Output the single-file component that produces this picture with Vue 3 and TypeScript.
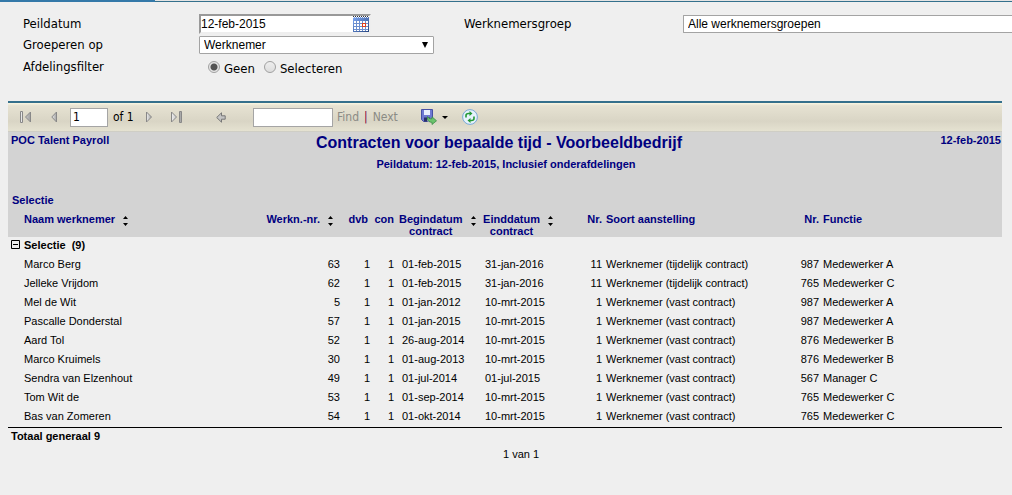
<script setup lang="ts">
import { ref } from 'vue'

interface Contract {
  name: string
  id: number
  begin: string
  end: string
  typeId: number
  type: string
  jobId: number
  job: string
}

const date = ref('12-feb-2015')
const filter = ref('geen')
const page = ref('1')
const search = ref('')

const fixed = 'Werknemer (vast contract)'
const temporary = 'Werknemer (tijdelijk contract)'

const contracts: Contract[] = [
  { name: 'Marco Berg', id: 63, begin: '01-feb-2015', end: '31-jan-2016', typeId: 11, type: temporary, jobId: 987, job: 'Medewerker A' },
  { name: 'Jelleke Vrijdom', id: 62, begin: '01-feb-2015', end: '31-jan-2016', typeId: 11, type: temporary, jobId: 765, job: 'Medewerker C' },
  { name: 'Mel de Wit', id: 5, begin: '01-jan-2012', end: '10-mrt-2015', typeId: 1, type: fixed, jobId: 987, job: 'Medewerker A' },
  { name: 'Pascalle Donderstal', id: 57, begin: '01-jan-2015', end: '10-mrt-2015', typeId: 1, type: fixed, jobId: 987, job: 'Medewerker A' },
  { name: 'Aard Tol', id: 52, begin: '26-aug-2014', end: '10-mrt-2015', typeId: 1, type: fixed, jobId: 876, job: 'Medewerker B' },
  { name: 'Marco Kruimels', id: 30, begin: '01-aug-2013', end: '10-mrt-2015', typeId: 1, type: fixed, jobId: 876, job: 'Medewerker B' },
  { name: 'Sendra van Elzenhout', id: 49, begin: '01-jul-2014', end: '01-jul-2015', typeId: 1, type: fixed, jobId: 567, job: 'Manager C' },
  { name: 'Tom Wit de', id: 53, begin: '01-sep-2014', end: '10-mrt-2015', typeId: 1, type: fixed, jobId: 765, job: 'Medewerker C' },
  { name: 'Bas van Zomeren', id: 54, begin: '01-okt-2014', end: '10-mrt-2015', typeId: 1, type: fixed, jobId: 765, job: 'Medewerker C' },
]
</script>

<template>
  <div class="page">
    <div class="tabline"><span></span></div>

    <form class="filters" @submit.prevent>
      <label for="date">Peildatum</label>
      <div class="datefield">
        <input id="date" v-model="date" type="text" />
        <button type="button" aria-label="Kalender">
          <svg width="16" height="16" viewBox="0 0 16 16">
            <defs>
              <linearGradient id="cal" x1="0" y1="0" x2="1" y2="1">
                <stop offset="0" stop-color="#7fa9f5" /><stop offset="1" stop-color="#27457f" />
              </linearGradient>
            </defs>
            <rect y="1" width="16" height="15" fill="url(#cal)" />
            <path d="M0 .5h16" stroke="#333" stroke-dasharray="1 1" />
            <path d="M0 1.5h16" stroke="#e8eefc" stroke-dasharray="1 1" />
            <rect x="1" y="5" width="14" height="10" fill="#fff" />
            <path d="M1 7.500h14M1 10.500h14M1 13.500h14M3.500 5v10M6.500 5v10M9.500 5v10M12.500 5v10" stroke="#6d8fce" />
            <rect x="9.500" y="7.500" width="3" height="3" fill="#fff" stroke="#e0401c" />
          </svg>
        </button>
      </div>
      <label for="group">Werknemersgroep</label>
      <div class="select open">
        <select id="group"><option>Alle werknemersgroepen</option></select>
      </div>

      <label for="by">Groeperen op</label>
      <div class="select by">
        <select id="by"><option>Werknemer</option></select>
        <svg width="6" height="6" viewBox="0 0 6 6"><path d="M0 0h6L3 6z" /></svg>
      </div>

      <span class="label row3">Afdelingsfilter</span>
      <div class="radios" role="radiogroup" aria-label="Afdelingsfilter">
        <input id="none" v-model="filter" type="radio" name="filter" value="geen" />
        <label for="none">Geen</label>
        <input id="pick" v-model="filter" type="radio" name="filter" value="selecteren" />
        <label for="pick">Selecteren</label>
      </div>
    </form>

    <main class="report">
      <div class="toolbar">
        <svg class="defs" width="0" height="0" aria-hidden="true">
          <defs>
            <linearGradient id="metal" x1="0" y1="0" x2="1" y2="0">
              <stop offset="0" stop-color="#eee" /><stop offset="1" stop-color="#a2a2a2" />
            </linearGradient>
          </defs>
        </svg>
        <div class="paging">
          <button class="first" type="button" aria-label="First page">
            <svg width="12" height="12" viewBox="0 0 12 12" fill="url(#metal)" stroke="#888"><path d="M.5.5h2v11h-2zM10.5 1v10L5.5 6z" /></svg>
          </button>
          <button class="prev" type="button" aria-label="Previous page">
            <svg width="7" height="12" viewBox="0 0 7 12" fill="url(#metal)" stroke="#888"><path d="M5.5 1v10L.8 6z" /></svg>
          </button>
          <input v-model="page" class="pageno" type="text" aria-label="Page" />
          <span class="of">of 1</span>
          <button class="next" type="button" aria-label="Next page">
            <svg width="7" height="12" viewBox="0 0 7 12" fill="url(#metal)" stroke="#888"><path d="M.5 1v10L5.5 6z" /></svg>
          </button>
          <button type="button" aria-label="Last page">
            <svg width="12" height="12" viewBox="0 0 12 12" fill="url(#metal)" stroke="#888"><path d="M.5 1v10L5.5 6zM8.500.5h2v11h-2z" /></svg>
          </button>
        </div>
        <button class="back" type="button" aria-label="Back">
          <svg width="10" height="11" viewBox="0 0 10 11"><path d="M.7 5.5 5.5.8v3h3.700v3.400H5.500v3z" fill="#c4c4c4" stroke="#777" /></svg>
        </button>
        <input v-model="search" class="search" type="text" aria-label="Find text" />
        <button class="text" type="button">Find</button>
        <span class="bar">|</span>
        <button class="text" type="button">Next</button>
        <button class="export" type="button" aria-label="Export">
          <svg width="28" height="16" viewBox="0 0 28 16">
            <path d="M.5.5h11v12h-9l-2-2z" fill="#6f79d2" stroke="#4650a6" />
            <path d="M3 1h6v5H3z" fill="#e9efff" />
            <path d="M3 8.500h6v4H3z" fill="#283068" /><path d="M6.500 9.500h1.500v3H6.500z" fill="#fff" />
            <path d="M6.500 7.500c1 2 2.500 2.500 4.500 2.200V7.800l4.500 4-4.500 3.700v-2.200c-3 0-5-2-4.500-5.800z" fill="#6cc46c" stroke="#3c8e49" stroke-width=".8" />
            <path d="M21 7h6l-3 3z" fill="#000" />
          </svg>
        </button>
        <button class="refresh" type="button" aria-label="Refresh">
          <svg width="16" height="16" viewBox="0 0 16 16">
            <circle cx="8" cy="8" r="7.400" fill="#e6f2fc" stroke="#79a9d5" />
            <path d="M4 8.500V6.500C4 5.200 5 4.500 6.500 4.500H8M12 7.500v2c0 1.300-1 2-2.500 2H8" fill="none" stroke="#249a34" stroke-width="1.600" />
            <path d="M7.500 2 10.500 4.500 7.500 7zM8.500 9 5.500 11.500l3 2.500z" fill="#249a34" />
          </svg>
        </button>
      </div>

      <header class="heading">
        <span>POC Talent Payroll</span>
        <div class="titles">
          <h1>Contracten voor bepaalde tijd - Voorbeeldbedrijf</h1>
          <p>Peildatum: 12-feb-2015, Inclusief onderafdelingen</p>
        </div>
        <span class="today">12-feb-2015</span>
      </header>

      <table>
        <colgroup>
          <col class="c-name" /><col class="c-id" /><col class="c-dvb" /><col class="c-con" /><col class="c-begin" />
          <col class="c-end" /><col class="c-nr" /><col class="c-type" /><col class="c-nr2" /><col />
        </colgroup>
        <thead>
          <tr class="section"><th colspan="10">Selectie</th></tr>
          <tr>
            <th class="name"><span class="sort">Naam werknemer <svg width="5" height="10" viewBox="0 0 5 10"><path d="M0 3h5L2.500 0zM0 7h5L2.500 10z" /></svg></span></th>
            <th class="num id"><span class="sort">Werkn.-nr. <svg width="5" height="10" viewBox="0 0 5 10"><path d="M0 3h5L2.500 0zM0 7h5L2.500 10z" /></svg></span></th>
            <th class="num dvb">dvb</th>
            <th class="num">con</th>
            <th class="date"><span class="sort"><span>Begindatum<br />contract</span><svg width="5" height="10" viewBox="0 0 5 10"><path d="M0 3h5L2.500 0zM0 7h5L2.500 10z" /></svg></span></th>
            <th class="date"><span class="sort"><span>Einddatum<br />contract</span><svg width="5" height="10" viewBox="0 0 5 10"><path d="M0 3h5L2.500 0zM0 7h5L2.500 10z" /></svg></span></th>
            <th class="num">Nr.</th>
            <th>Soort aanstelling</th>
            <th class="num">Nr.</th>
            <th>Functie</th>
          </tr>
        </thead>
        <tbody>
          <tr class="group">
            <td colspan="10">
              <button type="button" aria-label="Inklappen">
                <svg width="9" height="9" viewBox="0 0 9 9"><path d="M.5.5h8v8h-8zM2 4.500h5" fill="none" stroke="#000" /></svg>
              </button>
              <span>Selectie&nbsp; (9)</span>
            </td>
          </tr>
          <tr v-for="c in contracts" :key="c.id">
            <td class="name">{{ c.name }}</td>
            <td class="num">{{ c.id }}</td>
            <td class="num">1</td>
            <td class="num">1</td>
            <td class="begin">{{ c.begin }}</td>
            <td class="end">{{ c.end }}</td>
            <td class="num">{{ c.typeId }}</td>
            <td>{{ c.type }}</td>
            <td class="num">{{ c.jobId }}</td>
            <td>{{ c.job }}</td>
          </tr>
        </tbody>
        <tfoot>
          <tr><td colspan="10">Totaal generaal 9</td></tr>
        </tfoot>
      </table>
      <p class="pages">1 van 1</p>
    </main>
  </div>
</template>

<style>
html { background: #efefef; }
</style>

<style scoped>
.page { font: 11px/12px "Liberation Sans", Arial, sans-serif; color: #000; }
* { box-sizing: border-box; }
button { padding: 0; border: 0; background: none; font: inherit; color: inherit; }
svg { display: block; }

.tabline { height: 2px; background: #e4e4e4; border-bottom: 1px solid #34708c; }
.tabline span { display: block; width: 155px; height: 2px; background: #3479a9; }

.filters {
  display: grid;
  grid-template-columns: 176px 265px 219px 1fr;
  grid-template-rows: 20px 22px 22px;
  align-items: center;
  padding: 12px 0 23px 23px;
  font: 13px/18px "DejaVu Sans Condensed", Tahoma, sans-serif;
}
.filters input[type="text"], .filters select { font: 12px/16px "Liberation Sans", Arial, sans-serif; color: #000; }
.filters select {
  display: block;
  appearance: none;
  width: 100%;
  height: 18px;
  padding: 0 4px;
  border: 1px solid #a3a3a3;
  border-radius: 1px;
  background: #fff;
}
.datefield {
  display: flex;
  align-items: center;
  width: 172px;
  height: 20px;
  border: 2px solid #999;
  border-right-color: #eee;
  border-bottom-color: #eee;
  background: #fff;
}
.datefield input { flex: 1; min-width: 0; padding: 0; border: 0; background: none; outline: 0; }
.select { position: relative; }
.select svg { position: absolute; right: 6px; top: 6px; pointer-events: none; }
.by { width: 235px; }
.by + .row3 { grid-column: 1; }
.open select { border-right: 0; border-radius: 1px 0 0 1px; }
.radios { display: flex; align-items: center; padding-left: 9px; }
.radios input {
  appearance: none;
  width: 12px;
  height: 12px;
  margin: 0 4px 0 0;
  border: 1px solid #a0a0a0;
  border-radius: 50%;
  background: linear-gradient(#eee, #ddd);
}
.radios input:checked { background: radial-gradient(circle, #555 0 3px, #e6e6e6 4px); }
.radios label { margin: 4px 9px 0 0; }

.report { margin: 0 10px 0 8px; border-top: 2px solid #35708c; }
.toolbar {
  display: flex;
  align-items: center;
  height: 29px;
  padding-left: 12px;
  border-bottom: 1px solid #cfcec5;
  background: linear-gradient(#faf7e2, #e6e2d2 10%, #d9d5c5 65%, #e5e2d1);
  font: 12px/16px "DejaVu Sans Condensed", Tahoma, sans-serif;
}
.defs { position: absolute; }
.toolbar input { height: 19px; border: 1px solid #a5a5a5; padding: 0 2px; font: inherit; background: #fff; }
.paging { display: flex; align-items: center; }
.first { margin-right: 19px; }
.prev { margin-right: 12px; }
.pageno { width: 38px; margin-right: 5px; }
.of { width: 33px; }
.next { margin-right: 18px; }
.back { margin: 0 27px 0 33px; }
.search { width: 80px; margin-right: 4px; }
.text { color: #8b8b85; }
.bar { margin: 0 5px; color: #800040; }
.export { margin: 0 13px 0 23px; }

.heading {
  display: grid;
  grid-template-columns: 1fr auto 1fr;
  padding: 2px 1px 0 3px;
  background: #d3d3d3;
  color: #000080;
  font-weight: bold;
}
.titles { text-align: center; padding-bottom: 24px; }
.heading .today { text-align: right; }
h1 { margin: 0; padding-right: 14px; font-size: 16px; line-height: 18px; }
p { margin: 0; }
.titles p { padding-top: 6px; }

table { width: 100%; table-layout: fixed; border-collapse: separate; border-spacing: 0; }
.c-name { width: 216px; }
.c-id { width: 118px; }
.c-dvb { width: 30px; }
.c-con { width: 24px; }
.c-begin { width: 79px; }
.c-end { width: 85px; }
.c-nr { width: 44px; }
.c-type { width: 176px; }
.c-nr2 { width: 41px; }
th, td { padding: 0 2px; text-align: left; white-space: nowrap; }
th { height: 24px; color: #000080; vertical-align: top; }
thead { background: #d3d3d3; }
.section th { height: 19px; padding-left: 4px; }
tbody td { height: 19px; padding-bottom: 3px; }
.name { padding-left: 16px; }
.num { text-align: right; }
th.id { padding-right: 9px; }
th.dvb { padding-right: 4px; }
td.begin { padding-left: 6px; }
td.end { padding-left: 10px; }
.sort { display: inline-flex; align-items: flex-start; gap: 8px; }
.sort svg { margin-top: 3px; fill: #000; }
th.date { padding-left: 3px; text-align: center; }
.group td { padding-left: 3px; font-weight: bold; }
.group button { display: inline-block; margin-right: 4px; }
tfoot td { height: 18px; padding-left: 3px; padding-bottom: 2px; border-top: 1px solid #000; font-weight: bold; }
.pages { padding-top: 3px; margin-left: 32px; text-align: center; }
</style>
